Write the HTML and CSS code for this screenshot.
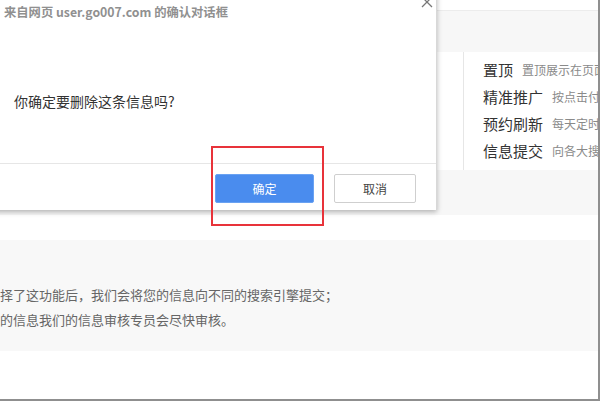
FILE: index.html
```html
<!DOCTYPE html>
<html lang="zh-CN">
<head>
<meta charset="utf-8">
<title>确认对话框</title>
<link rel="stylesheet" href="styles.css">
</head>
<body>
<div class="page">
  <div class="topbar"></div>
  <div class="tabs"></div>
  <div class="feature">
    <div class="feature-list">
      <div class="row"><span class="name">置顶</span><span class="desc">置顶展示在页面</span></div>
      <div class="row"><span class="name">精准推广</span><span class="desc">按点击付费</span></div>
      <div class="row"><span class="name">预约刷新</span><span class="desc">每天定时刷</span></div>
      <div class="row"><span class="name">信息提交</span><span class="desc">向各大搜索</span></div>
    </div>
  </div>
  <div class="band"></div>
  <div class="spacer"></div>
  <div class="notice">
    <p class="line">选择了这功能后，我们会将您的信息向不同的搜索引擎提交；</p>
    <p class="line">交的信息我们的信息审核专员会尽快审核。</p>
  </div>
  <div class="footer"></div>
</div>

<div class="dialog">
  <div class="dialog-title">来自网页 user.go007.com 的确认对话框</div>
  <svg class="close" width="12" height="12" viewBox="0 0 12 12"><path d="M1 1 L11 11 M11 1 L1 11" stroke="#777" stroke-width="1.3" fill="none"/></svg>
  <div class="dialog-body">你确定要删除这条信息吗?</div>
  <div class="dialog-actions">
    <button class="btn btn-primary">确定</button>
    <button class="btn btn-default">取消</button>
  </div>
</div>
<div class="highlight"></div>
</body>
</html>
```

FILE: styles.css
```css
html, body {
  margin: 0;
  padding: 0;
  background: #fff;
}
body {
  width: 600px;
  height: 401px;
  overflow: hidden;
  position: relative;
  font-family: "Noto Sans CJK SC", "Noto Sans", sans-serif;
}
.page {
  width: 598px;
  height: 399px;
  border-right: 2px solid #8f8f8f;
  border-bottom: 2px solid #8f8f8f;
  display: flex;
  flex-direction: column;
  overflow: hidden;
}
.topbar {
  height: 10px;
  background: #fff;
  border-bottom: 1px solid #ececec;
  flex: none;
}
.tabs {
  height: 41px;
  background: #f7f7f7;
  flex: none;
}
.feature {
  height: 118px;
  flex: none;
  background: #fff;
  padding-left: 463px;
  box-sizing: border-box;
  display: flex;
}
.feature-list {
  flex: 1;
  border-left: 1px solid #e6e6e6;
  padding: 4px 0 0 19px;
  overflow: hidden;
}
.row {
  height: 27px;
  display: flex;
  align-items: center;
  white-space: nowrap;
}
.name {
  font-size: 15px;
  color: #333;
  margin-right: 9px;
}
.desc {
  font-size: 12px;
  color: #8a8a8a;
}
.band {
  height: 45px;
  background: #f7f7f7;
  flex: none;
}
.spacer {
  height: 25px;
  background: #fff;
  flex: none;
}
.notice {
  height: 111px;
  flex: none;
  background: #f8f8f8;
  padding-top: 42px;
  box-sizing: border-box;
}
.line {
  margin: 0 0 0 -13px;
  font-size: 13px;
  line-height: 25px;
  color: #666;
  white-space: nowrap;
}
.footer {
  flex: 1;
  background: #fff;
}

/* dialog overlay */
.dialog {
  position: absolute;
  left: -10px;
  top: -10px;
  width: 447px;
  height: 220px;
  background: #fff;
  border-right: 1px solid #d8d8d8;
  box-shadow: 0 2px 5px rgba(0,0,0,0.28);
  box-sizing: border-box;
  padding-left: 10px;
  display: flex;
  flex-direction: column;
}
.dialog-title {
  margin-top: 14px;
  padding-left: 4px;
  font-size: 12.3px;
  line-height: 17px;
  font-weight: 600;
  color: #909090;
}
.close {
  position: absolute;
  left: 431px;
  top: 6px;
}
.dialog-body {
  margin-top: 70px;
  padding-left: 14px;
  font-size: 14px;
  line-height: 20px;
  color: #333;
}
.dialog-actions {
  margin-top: 52px;
  border-top: 1px solid #e6e6e6;
  display: flex;
  justify-content: flex-end;
  gap: 20px;
  padding: 10px 20px 0 0;
}
.btn {
  height: 29px;
  font-family: "Noto Sans CJK SC", sans-serif;
  font-size: 12px;
  border-radius: 2px;
  padding: 0;
}
.btn-primary {
  width: 99px;
  background: #4a8cee;
  border: 1px solid #6aa2f2;
  color: #fff;
}
.btn-default {
  width: 82px;
  background: #fff;
  border: 1px solid #cfcfcf;
  color: #444;
}
.highlight {
  position: absolute;
  left: 211px;
  top: 146px;
  width: 113px;
  height: 80px;
  border: 2px solid #e8333a;
  box-sizing: border-box;
}
```
